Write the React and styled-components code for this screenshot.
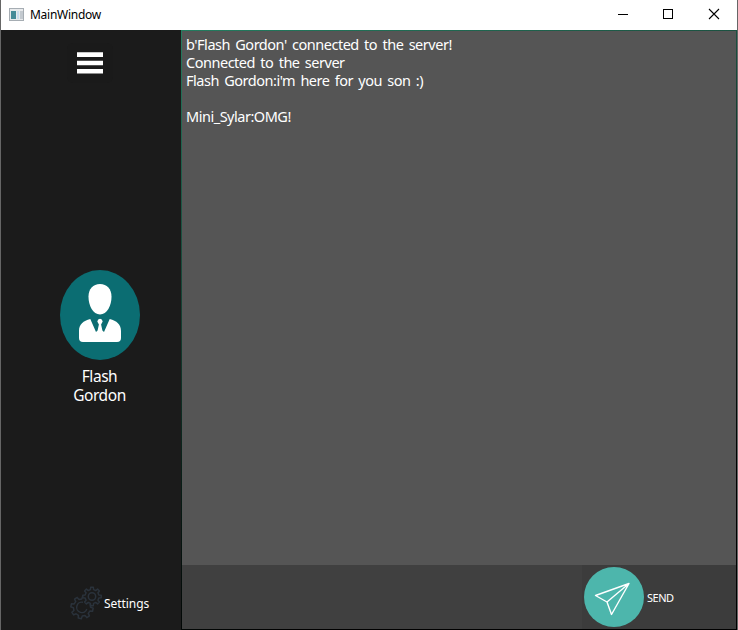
import React from "react";
import styled, { createGlobalStyle } from "styled-components";

const GlobalStyle = createGlobalStyle`
  * { box-sizing: border-box; }
  body { margin: 0; background: #1b1b1b; overflow: hidden; }
`;

const Window = styled.div`
  width: 738px;
  height: 630px;
  display: flex;
  flex-direction: column;
  color: #fff;
  font-family: "Noto Sans", "DejaVu Sans", sans-serif;
  border: solid #666;
  border-width: 0 1px;
  background: #1b1b1b;
`;

const TitleBar = styled.header`
  height: 30px;
  flex: none;
  display: flex;
  align-items: center;
  background: #fff;
  color: #000;
  padding-left: 8px;
`;

const Title = styled.span`
  flex: 1;
  margin-left: 5px;
  font-size: 12px;
  line-height: 16px;
  letter-spacing: -0.27px;
`;

const WindowButton = styled.span`
  width: 46px;
  height: 30px;
  display: flex;
  svg { display: block; }
`;

const Body = styled.div`
  flex: 1;
  min-height: 0;
  display: flex;
`;

const Sidebar = styled.nav`
  width: 180px;
  flex: none;
  display: flex;
  flex-direction: column;
  background: #1b1b1b;
`;

const MenuButton = styled.div`
  margin: 13px 0 0 66px;
  width: 46px;
  height: 40px;
  background: #1a1a1a;
  border-radius: 6px;
`;

const Profile = styled.div`
  margin-top: 187px;
  padding-left: 18px;
  display: flex;
  flex-direction: column;
  align-items: center;
  svg { display: block; }
`;

const ProfileName = styled.div`
  margin-top: 7px;
  width: 80px;
  display: flex;
  flex-direction: column;
  align-items: center;
  font-size: 15.5px;
  line-height: 19px;
  letter-spacing: -0.45px;
  padding-right: 1px;
`;

const Settings = styled.div`
  margin: auto 0 10px 68px;
  height: 34px;
  display: flex;
  align-items: center;
  font-size: 12px;
  letter-spacing: -0.05px;
  svg { display: block; margin-right: 1px; }
`;

const Main = styled.main`
  flex: 1;
  display: flex;
  flex-direction: column;
  padding: 1px;
  background: linear-gradient(160deg, #237c5f 0%, #1b5241 25%, #0a2019 55%, #000 80%);
`;

const Messages = styled.section`
  height: 534px;
  padding: 4px 0 0 4px;
  background: #555;
`;

const Message = styled.div`
  height: 18px;
  font-size: 14.5px;
  line-height: 18px;
  white-space: pre;
  letter-spacing: -0.48px;
  word-spacing: 2px;
`;

const Composer = styled.footer`
  flex: 1;
  display: flex;
  background: #404040;
`;

const Input = styled.div`
  width: 400px;
`;

const SendButton = styled.div`
  flex: 1;
  display: flex;
  align-items: center;
  background: #3c3c3c;
  padding-left: 2px;
  font-size: 11px;
  letter-spacing: -0.5px;
  svg { display: block; margin-right: 3px; }
`;

const AppIcon = () => (
  <svg width="16" height="16" viewBox="0 0 16 16">
    <rect x=".5" y="1.5" width="14" height="12" fill="#e8eaec" stroke="#a6adb3" />
    <rect x="2" y="4" width="5" height="8" fill="#468b98" />
    <rect x="8" y="4" width="2" height="8" fill="#cbdcec" />
    <rect x="11" y="4" width="3" height="8" fill="#c3c9cf" />
  </svg>
);

const gearPath = (cx, cy, r, depth, offset) => {
  const teeth = 8;
  const pts = [];
  for (let i = 0; i < teeth; i++) {
    [[-0.29, r - depth], [-0.18, r], [0.18, r], [0.29, r - depth]].forEach(([a, q]) => {
      const t = ((i + a) / teeth) * Math.PI * 2 + offset;
      pts.push(`${(cx + Math.cos(t) * q).toFixed(2)} ${(cy + Math.sin(t) * q).toFixed(2)}`);
    });
  }
  return `M${pts.join("L")}Z`;
};

const Gears = () => (
  <svg width="34" height="34" viewBox="0 0 34 34" fill="none" stroke="#2a323b" strokeWidth="1.5" strokeLinejoin="round">
    <path d={gearPath(13, 21.5, 11.2, 2.6, 0.2)} />
    <path d="M14 16.3A5.2 5.2 0 1 0 17.8 23" />
    <path d={gearPath(23, 10.5, 9.3, 2.3, 0)} fill="#1b1b1b" />
    <circle cx="23" cy="10.5" r="3.7" />
  </svg>
);

export default function App() {
  return (
    <>
      <GlobalStyle />
      <Window>
        <TitleBar>
          <AppIcon />
          <Title>MainWindow</Title>
          <WindowButton>
            <svg width="46" height="30"><path d="M19 14.5h10" stroke="#000" /></svg>
          </WindowButton>
          <WindowButton>
            <svg width="46" height="30"><rect x="18.5" y="9.5" width="9" height="9" fill="none" stroke="#000" /></svg>
          </WindowButton>
          <WindowButton>
            <svg width="46" height="30"><path d="M18 9l10 10M28 9L18 19" stroke="#000" strokeWidth="1.1" /></svg>
          </WindowButton>
        </TitleBar>
        <Body>
          <Sidebar>
            <MenuButton>
              <svg width="46" height="40" fill="#fff">
                <path d="M10 9.3h26v4.7H10zM10 17.7h26v4.6H10zM10 26h26v4.5H10z" />
              </svg>
            </MenuButton>
            <Profile>
              <svg width="80" height="90" viewBox="0 0 80 90">
                <ellipse cx="40" cy="45" rx="40" ry="45" fill="#0b6d72" />
                <g fill="#fff">
                  <path d="M40 14c7 0 11.5 5 11.5 12.5C51.5 36 47 44.5 40 44.5S28.500 36 28.5 26.5C28.5 19 33 14 40 14z" />
                  <path d="M30.3 49L36 62l1.600-1.600 1.300-6-1.600-3q.4-2.600 2.700-2.600t2.700 2.600l-1.600 3 1.300 6L44 62 49.700 49c7 2 11.300 5 11.300 12v7q0 4-4 4H23q-4 0-4-4v-7c0-7 4.300-10 11.300-12z" />
                </g>
              </svg>
              <ProfileName><span>Flash</span><span>Gordon</span></ProfileName>
            </Profile>
            <Settings><Gears />Settings</Settings>
          </Sidebar>
          <Main>
            <Messages>
              <Message>b'Flash Gordon' connected to the server!</Message>
              <Message>Connected to the server</Message>
              <Message>Flash Gordon:i'm here for you son :)</Message>
              <Message />
              <Message>Mini_Sylar:OMG!</Message>
            </Messages>
            <Composer>
              <Input />
              <SendButton>
                <svg width="60" height="60" viewBox="0 0 60 60">
                  <circle cx="30" cy="30" r="30" fill="#4db6ac" />
                  <path d="M11.500 28.500L45 16.500 27.500 47.500 23 35zM45 16.500L23 35" fill="none" stroke="#fff" strokeWidth="1.400" strokeLinejoin="round" />
                </svg>
                SEND
              </SendButton>
            </Composer>
          </Main>
        </Body>
      </Window>
    </>
  );
}
